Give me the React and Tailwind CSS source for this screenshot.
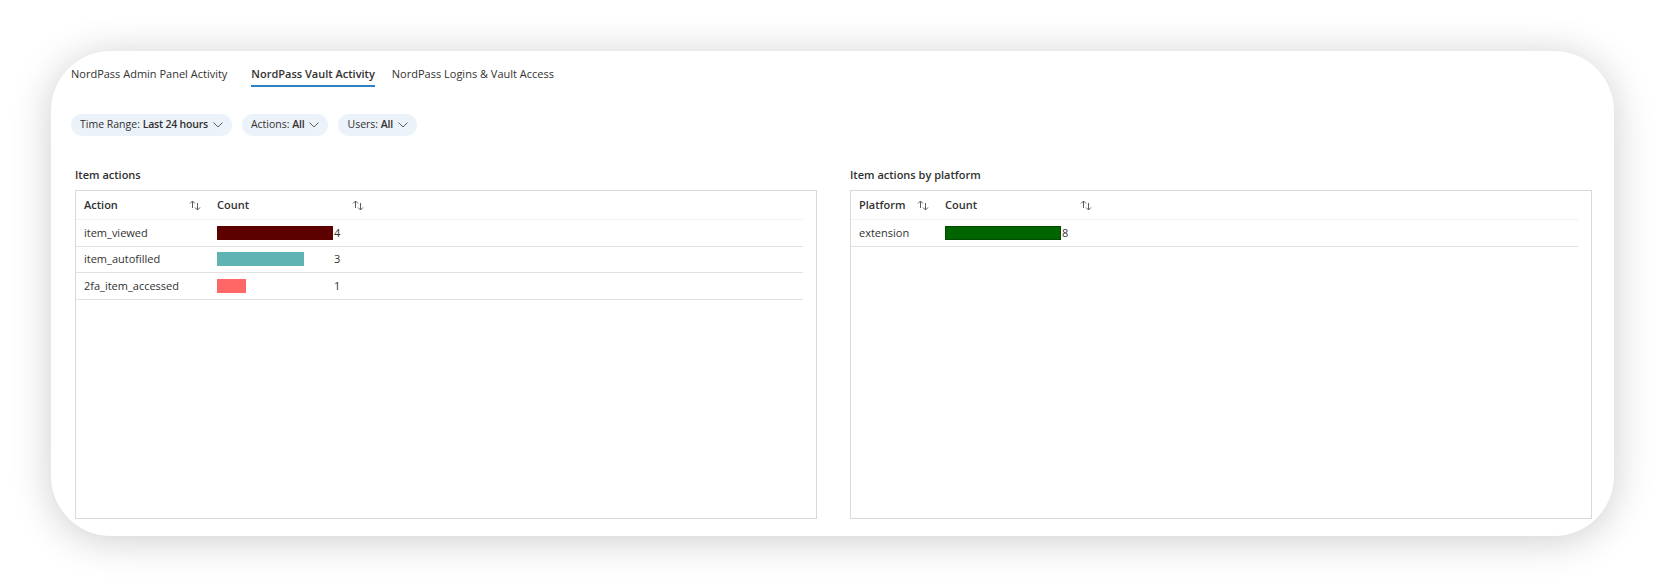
import React from "react";

const Chevron = () => (
  <svg width="10" height="6" viewBox="0 0 10 6" className="text-[#605e5c]">
    <polyline points="0.5,0.5 5,5 9.5,0.5" fill="none" stroke="currentColor" strokeWidth="1" />
  </svg>
);

const SortIcon = () => (
  <svg width="12" height="11" viewBox="0 0 12 11" className="text-[#605e5c]">
    <path d="M3.5 8V1M1 3.5L3.5 1L6 3.5" fill="none" stroke="currentColor" strokeWidth="1" />
    <path d="M8.5 3V10M6 7.5L8.5 10L11 7.5" fill="none" stroke="currentColor" strokeWidth="1" />
  </svg>
);

const Chip = ({ label, value }) => (
  <div className="flex items-center gap-[5px] h-[22px] px-[9px] rounded-full bg-[#ebf2f9] text-[10.5px] text-[#323130]">
    <span>
      {label} <span className="font-semibold tracking-[-0.2px]">{value}</span>
    </span>
    <Chevron />
  </div>
);

const Bar = ({ value, max, color, width = 116 }) => (
  <div className="flex items-center">
    <div className="w-[116px] flex">
      <div className={`h-[14px] ${color}`} style={{ width: (value / max) * width }} />
    </div>
    <span className="ml-[1px]">{value}</span>
  </div>
);

const Table = ({ first, firstWidth, rows, max }) => (
  <div className="flex-1 border border-[#d9d9d9] text-[11px] text-[#323130]">
    <div className="mr-[13px]">
      <div className="flex h-[29px] items-center border-b border-[#f1f1f1] font-semibold">
        <div className={`${firstWidth} flex items-center justify-between pl-[8px] pr-[7px]`}>
          <span>{first}</span>
          <SortIcon />
        </div>
        <div className="w-[163px] flex items-center justify-between pl-[9px] pr-[7px]">
          <span>Count</span>
          <SortIcon />
        </div>
      </div>
      {rows.map((r) => (
        <div key={r.name} className="flex h-[26.5px] items-center border-b border-[#e1e1e1]">
          <div className={`${firstWidth} pl-[8px]`}>{r.name}</div>
          <div className="pl-[9px]">
            <Bar value={r.value} max={max} color={r.color} />
          </div>
        </div>
      ))}
    </div>
  </div>
);

export default function App() {
  const tabs = [
    { label: "NordPass Admin Panel Activity", gap: "" },
    { label: "NordPass Vault Activity", gap: "ml-[24px]" },
    { label: "NordPass Logins & Vault Access", gap: "ml-[17px]" },
  ];
  return (
    <div className="w-[1665px] h-[588px] bg-white pt-[51px] pb-[52px] px-[51px]" style={{ fontFamily: '"Open Sans", "Noto Sans", sans-serif' }}>
      <div className="w-full h-full flex flex-col rounded-[60px] bg-white shadow-[0_4px_40px_rgba(0,0,0,0.2)] pt-[15px] pb-[17px] pl-[20px] pr-[22px]">
        <div className="flex text-[11px] text-[#323130]">
          {tabs.map((t, i) => (
            <div key={t.label} className={`flex flex-col ${t.gap}`}>
              <span className={`leading-[16px] ${i === 1 ? "font-semibold" : ""}`}>{t.label}</span>
              <div className={`mt-[3px] h-[2px] ${i === 1 ? "bg-[#2f7fc1]" : ""}`} />
            </div>
          ))}
        </div>

        <div className="flex gap-[10px] mt-[27px]">
          <Chip label="Time Range:" value="Last 24 hours" />
          <Chip label="Actions:" value="All" />
          <Chip label="Users:" value="All" />
        </div>

        <div className="flex-1 flex gap-[33px] mt-[31px] pl-[4px]">
          <div className="flex-1 flex flex-col">
            <div className="text-[11px] leading-[16px] font-semibold text-[#323130] mb-[7px]">Item actions</div>
            <Table
              first="Action"
              firstWidth="w-[132px]"
              max={4}
              rows={[
                { name: "item_viewed", value: 4, color: "bg-[#5c0000]" },
                { name: "item_autofilled", value: 3, color: "bg-[#5fb3b3]" },
                { name: "2fa_item_accessed", value: 1, color: "bg-[#ff6666]" },
              ]}
            />
          </div>
          <div className="flex-1 flex flex-col">
            <div className="text-[11px] leading-[16px] font-semibold text-[#323130] mb-[7px]">Item actions by platform</div>
            <Table
              first="Platform"
              firstWidth="w-[85px]"
              max={8}
              rows={[{ name: "extension", value: 8, color: "bg-[#006400] border border-[#004a00]" }]}
            />
          </div>
        </div>
      </div>
    </div>
  );
}
